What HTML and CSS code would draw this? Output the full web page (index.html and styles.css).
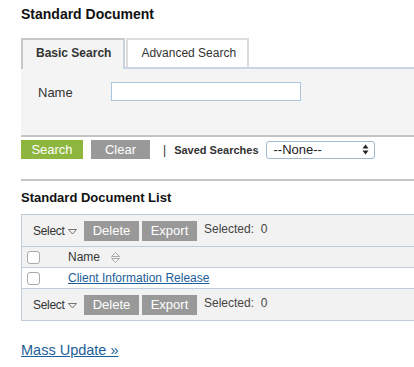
FILE: index.html
```html
<!DOCTYPE html>
<html>
  <head>
    <meta charset="UTF-8">
    <title>Standard Document</title>
    <link rel="stylesheet" href="styles.css">
  </head>
  <body>
    <div class="page">
      <div class="page-title">Standard Document</div>

      <!-- search tabs -->
      <div class="tabs">
        <div class="tab active">Basic Search</div>
        <div class="tab">Advanced Search</div>
      </div>
      <div class="search-panel">
        <label class="field-label">Name</label>
        <input type="text" class="field-input">
      </div>
      <div class="search-actions">
        <button class="btn btn-green">Search</button>
        <button class="btn btn-gray">Clear</button>
        <span class="sep">|</span>
        <span class="saved-label">Saved Searches</span>
        <div class="saved-select">
          <span>--None--</span>
          <svg width="7" height="11" viewBox="0 0 7 11"><path d="M3.5 0.5 L6.5 4.5 L0.5 4.5 Z M0.5 6.5 L6.5 6.5 L3.5 10.5 Z" fill="#222"/></svg>
        </div>
      </div>

      <div class="list-title">Standard Document List</div>

      <!-- result list -->
      <div class="list-box">
        <div class="toolbar">
          <span class="select-menu">Select <svg width="9" height="6" viewBox="0 0 9 6"><path d="M0.5 0.5 L8.5 0.5 L4.5 5 Z" fill="none" stroke="#666" stroke-width="0.9"/></svg></span>
          <button class="btn btn-gray btn-small">Delete</button>
          <button class="btn btn-gray btn-small">Export</button>
          <span class="selected">Selected:&nbsp; 0</span>
        </div>
        <div class="row row-head">
          <span class="check"></span>
          <span class="col-name">Name</span>
          <svg class="sort" width="9" height="11" viewBox="0 0 9 11"><path d="M0.5 4.5 L4.5 0.5 L8.5 4.5 Z M0.5 6.5 L8.5 6.5 L4.5 10.5 Z" fill="none" stroke="#999" stroke-width="0.8"/></svg>
        </div>
        <div class="row">
          <span class="check"></span>
          <a href="#" class="col-name link">Client Information Release</a>
        </div>
        <div class="toolbar toolbar-bottom">
          <span class="select-menu">Select <svg width="9" height="6" viewBox="0 0 9 6"><path d="M0.5 0.5 L8.5 0.5 L4.5 5 Z" fill="none" stroke="#666" stroke-width="0.9"/></svg></span>
          <button class="btn btn-gray btn-small">Delete</button>
          <button class="btn btn-gray btn-small">Export</button>
          <span class="selected">Selected:&nbsp; 0</span>
        </div>
      </div>

      <a href="#" class="mass-update">Mass Update »</a>
    </div>
  </body>
</html>
```

FILE: styles.css
```css
/* base */
html,body{margin:0;padding:0;background:#fff;color:#222;font-family:'Liberation Sans',Arial,sans-serif;}
.page{padding:6px 0 0 21px;overflow:hidden;}
.page-title{font-size:14px;font-weight:bold;line-height:16px;color:#111;}

/* tabs */
.tabs{display:flex;margin-top:16px;border-bottom:2px solid #c9d5e2;}
.tab{height:27px;line-height:27px;padding:0 11px 0 13px;font-size:12px;color:#333;border:2px solid #dcdcdc;border-bottom:none;margin-left:1px;background:#fff;}
.tab.active{font-weight:bold;color:#333;background:#f4f4f4;border-color:#c8c8c8;border-right-color:#c8d4e0;margin-left:0;margin-bottom:-2px;height:29px;padding:0 12px 0 13px;}
.search-panel{background:#f4f4f4;height:66px;border-bottom:2px solid #c4c4c4;display:flex;align-items:flex-start;}
.field-label{font-size:13px;color:#333;margin:16px 0 0 17px;width:73px;}
.field-input{margin-top:13px;width:190px;height:19px;box-sizing:border-box;border:1px solid #a9c6de;padding:0;background:#fff;}

/* search buttons */
.search-actions{display:flex;align-items:center;margin-top:3px;height:19px;}
.btn{border:none;border-radius:0;color:#fff;font-family:inherit;font-size:13px;padding:0;height:19px;cursor:pointer;}
.btn-green{background:#8db63f;width:62px;}
.btn-gray{background:#999;width:59px;margin-left:8px;}
.sep{font-size:12px;color:#333;margin-left:13px;}
.saved-label{font-size:11px;font-weight:bold;color:#333;margin-left:8px;}
.saved-select{display:flex;align-items:center;justify-content:space-between;margin-left:7px;width:109px;height:18px;box-sizing:border-box;border:1px solid #9fb9cf;border-radius:3px;background:#fff;padding:0 5px 0 7px;font-size:13px;color:#222;}

/* list */
.list-title{margin-top:20px;padding-top:9px;border-top:2px solid #c4c4c4;font-size:13px;font-weight:bold;color:#111;line-height:16px;}
.list-box{margin-top:8px;border:1px solid #c2ccd6;border-right:none;}
.toolbar{display:flex;align-items:center;height:31px;background:#f2f2f2;border-bottom:1px solid #c2ccd6;padding-left:11px;}
.toolbar-bottom{border-bottom:none;height:31px;}
.select-menu{font-size:12px;letter-spacing:-0.3px;color:#333;width:51px;display:flex;align-items:center;gap:3px;}
.select-menu svg{margin-top:2px;}
.btn-small{width:55px;margin-left:3px;height:20px;}
.select-menu + .btn-small{margin-left:0;}
.selected{font-size:12px;color:#444;margin-left:7px;margin-top:-3px;}
.row{display:flex;align-items:center;height:20px;border-bottom:1px solid #c2ccd6;background:#fff;}
.row-head{background:#f2f2f2;}
.check{width:11px;height:11px;border:1px solid #aaa;border-radius:3px;background:#fff;margin-left:5px;}
.col-name{font-size:12px;color:#333;margin-left:28px;}
.sort{margin-left:11px;}
.link{color:#1c5e99;text-decoration:underline;}
.mass-update{display:inline-block;margin-top:21px;font-size:14.5px;color:#1c5e99;text-decoration:underline;}
```
